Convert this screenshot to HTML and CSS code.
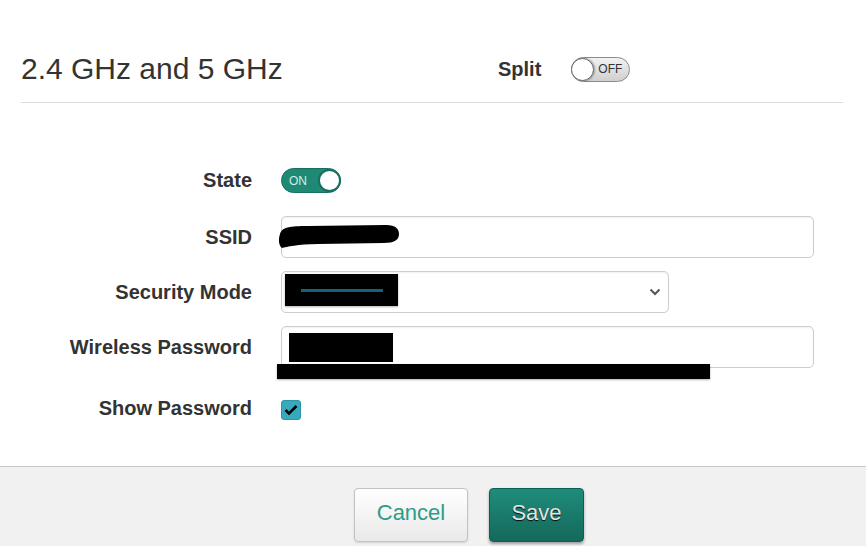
FILE: index.html
```html
<!DOCTYPE html>
<html lang="en">
<head>
<meta charset="utf-8">
<title>Wireless settings</title>
<link rel="stylesheet" href="styles.css">
</head>
<body>
<div class="modal">
  <div class="modal-body">
    <div class="header">
      <h2 class="title">2.4 GHz and 5 GHz</h2>
      <div class="split">
        <span class="split-label">Split</span>
        <span class="toggle toggle-off"><span class="knob"></span><span class="toggle-text">OFF</span></span>
      </div>
    </div>
    <div class="form">
      <div class="row row-state">
        <label class="label">State</label>
        <span class="toggle toggle-on"><span class="toggle-text">ON</span><span class="knob"></span></span>
      </div>
      <div class="row row-input">
        <label class="label">SSID</label>
        <div class="field field-wide">
          <div class="input"></div>
          <svg class="redact redact-ssid" width="124" height="26" viewBox="0 0 124 26"><path d="M2 10 C4 3 12 2 30 2 L108 1 C118 1 121 5 121 10 C121 16 116 19 106 19 L40 20 C20 20 8 23 4 24 C1 22 0 16 2 10 Z" fill="#000"/></svg>
        </div>
      </div>
      <div class="row row-input">
        <label class="label">Security Mode</label>
        <div class="field field-select">
          <div class="input select">
            <svg class="chevron" width="12" height="8" viewBox="0 0 12 8"><path d="M1.5 1.5 L6 6 L10.5 1.5" fill="none" stroke="#555" stroke-width="2"/></svg>
          </div>
          <div class="redact redact-mode"><span class="redact-line"></span></div>
        </div>
      </div>
      <div class="row row-input row-pass">
        <label class="label">Wireless Password</label>
        <div class="field field-wide">
          <div class="input"></div>
          <div class="redact redact-pass"></div>
          <div class="redact redact-bar"></div>
        </div>
      </div>
      <div class="row row-check">
        <label class="label">Show Password</label>
        <span class="checkbox"><svg width="14" height="12" viewBox="0 0 14 12"><path d="M1.5 6 L5 9.5 L12.5 2" fill="none" stroke="#000" stroke-width="2.6"/></svg></span>
      </div>
    </div>
  </div>
  <div class="footer">
    <button class="btn btn-cancel">Cancel</button>
    <button class="btn btn-save">Save</button>
  </div>
</div>
</body>
</html>
```
FILE: styles.css
```css
html, body {
  margin: 0;
  padding: 0;
  background: #fff;
}
body {
  font-family: "Liberation Sans", Arial, Helvetica, sans-serif;
  color: #333;
  width: 866px;
  height: 546px;
  overflow: hidden;
}
.modal {
  display: flex;
  flex-direction: column;
  height: 546px;
}
.modal-body {
  padding: 0 23px 0 21px;
  flex: 1;
}
.header {
  display: grid;
  grid-template-columns: 477px auto;
  align-items: center;
  padding: 52px 0 16px;
  border-bottom: 1px solid #dcdcdc;
}
.title {
  margin: 0;
  font-size: 30px;
  line-height: 34px;
  font-weight: normal;
  color: #333;
}
.split {
  display: flex;
  align-items: center;
  gap: 30px;
}
.split-label {
  font-weight: bold;
  font-size: 20px;
  color: #333;
}
.toggle {
  display: flex;
  align-items: center;
  box-sizing: border-box;
  height: 25px;
  border-radius: 13px;
  font-size: 12px;
  line-height: 1;
}
.toggle-off {
  width: 59px;
  border: 1px solid #8c8c8c;
  background: linear-gradient(#f2f2f2, #cfcfcf);
}
.toggle-off .knob {
  width: 23px;
  height: 23px;
  margin-left: -1px;
  box-sizing: border-box;
  border: 1px solid #666;
  border-radius: 50%;
  background: #fff;
  box-shadow: 1px 0 2px rgba(0,0,0,.3);
}
.toggle-off .toggle-text {
  margin-left: 4px;
  color: #333;
}
.toggle-on {
  width: 60px;
  border: 1px solid #17705f;
  background: #1e8a76;
  justify-content: space-between;
  padding-left: 7px;
}
.toggle-on .toggle-text {
  color: #d6ece6;
}
.toggle-on .knob {
  width: 23px;
  height: 23px;
  margin-right: -1px;
  box-sizing: border-box;
  border: 2px solid #17705f;
  border-radius: 50%;
  background: #fff;
}
.form {
  padding-top: 65px;
}
.row {
  display: flex;
  align-items: center;
  gap: 29px;
}
.label {
  width: 231px;
  flex: none;
  text-align: right;
  font-weight: bold;
  font-size: 20px;
  color: #333;
}
.row-state {
  height: 25px;
  margin-bottom: 23px;
}
.row-input {
  height: 42px;
  margin-bottom: 13px;
}
.row-pass {
  margin-bottom: 32px;
}
.row-check {
  height: 20px;
}
.row-check .label {
  margin-top: -3px;
}
.field {
  position: relative;
  height: 42px;
}
.field-wide {
  width: 533px;
}
.field-select {
  width: 388px;
}
.input {
  box-sizing: border-box;
  height: 42px;
  border: 1px solid #cdcdcd;
  border-radius: 5px;
  background: #fff;
  box-shadow: inset 0 1px 2px rgba(0,0,0,.06);
}
.select {
  display: flex;
  align-items: center;
  justify-content: flex-end;
  padding-right: 7px;
}
.redact {
  position: absolute;
  background: #000;
}
svg.redact {
  background: none;
  left: -3px;
  top: 8px;
}
.redact-mode {
  left: 4px;
  top: 3px;
  width: 113px;
  height: 32px;
  display: flex;
  align-items: center;
  padding-left: 16px;
  box-sizing: border-box;
  box-shadow: 0 1px 2px rgba(0,0,0,.3);
}
.redact-line {
  display: block;
  width: 82px;
  height: 3px;
  background: #1b5e7c;
}
.redact-pass {
  left: 8px;
  top: 7px;
  width: 104px;
  height: 29px;
}
.redact-bar {
  left: -4px;
  top: 38px;
  width: 433px;
  height: 15px;
  box-shadow: 0 1px 2px rgba(0,0,0,.3);
}
.checkbox {
  display: flex;
  align-items: center;
  justify-content: center;
  box-sizing: border-box;
  width: 20px;
  height: 20px;
  border-radius: 3px;
  border: 1px solid #2c95a6;
  background: #37a9bc;
}
.footer {
  height: 80px;
  border-top: 1px solid #c9c9c9;
  background: #f1f1f1;
  display: flex;
  align-items: flex-start;
  gap: 21px;
  padding: 21px 0 0 354px;
  box-sizing: border-box;
}
.btn {
  height: 54px;
  border-radius: 4px;
  font-family: "Liberation Sans", Arial, sans-serif;
  font-size: 22px;
  padding: 0 0 5px;
  cursor: pointer;
}
.btn-cancel {
  width: 114px;
  border: 1px solid #c4c0c6;
  background: linear-gradient(#ffffff, #e9e9e9);
  color: #2b9c87;
  box-shadow: 0 1px 2px rgba(0,0,0,.12);
}
.btn-save {
  width: 95px;
  border: 1px solid #0f5d50;
  background: linear-gradient(#1f8c7a, #14695c);
  color: #e4e4e4;
  text-shadow: 0 1px 1px rgba(0,0,0,.9);
  box-shadow: 0 2px 3px rgba(0,0,0,.35);
}
```
